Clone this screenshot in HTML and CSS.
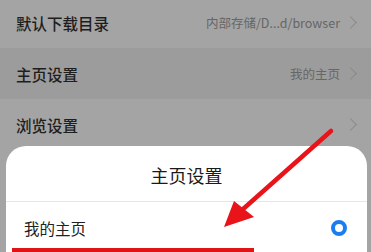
FILE: index.html
```html
<!DOCTYPE html>
<html lang="zh">

<head>
    <meta charset="UTF-8">
    <meta name="viewport" content="width=device-width, initial-scale=1.0">
    <title>主页设置</title>
    <link rel="stylesheet" href="styles.css">
</head>

<body>
    <div class="settings">
        <div class="row">
            <span class="label">默认下载目录</span>
            <span class="value">内部存储/D...d/browser</span>
            <span class="chevron"></span>
        </div>
        <div class="row pressed">
            <span class="label">主页设置</span>
            <span class="value">我的主页</span>
            <span class="chevron"></span>
        </div>
        <div class="row">
            <span class="label">浏览设置</span>
            <span class="value"></span>
            <span class="chevron"></span>
        </div>
    </div>

    <div class="sheet">
        <div class="sheet-title">主页设置</div>
        <div class="option">
            <span>我的主页</span>
            <span class="radio"></span>
        </div>
    </div>

    <div class="highlight"></div>

    <svg class="arrow" width="371" height="252" viewBox="0 0 371 252">
        <line x1="331" y1="131" x2="242" y2="210" stroke="#e8141a" stroke-width="4.5" stroke-linecap="round" />
        <polygon points="224,227 234,201 254,217" fill="#e8141a" />
    </svg>
</body>

</html>
```

FILE: styles.css
```css
body {
    margin: 0;
    width: 371px;
    height: 252px;
    overflow: hidden;
    position: relative;
    background-color: #a4a4a4;
    font-family: "Noto Sans CJK SC", "Noto Sans", sans-serif;
}

.settings {
    margin-top: -3px;
}

.row {
    height: 51px;
    display: flex;
    align-items: center;
    padding: 0 14px 0 16px;
}

.row.pressed {
    background-color: #9c9c9c;
}

.label {
    font-size: 15.5px;
    font-weight: 500;
    color: #1e1e1e;
    flex: 1;
}

.value {
    font-size: 12.5px;
    color: #666;
}

.chevron {
    width: 8px;
    height: 8px;
    border-top: 1.2px solid #8a8a8a;
    border-right: 1.2px solid #8a8a8a;
    transform: rotate(45deg);
    margin-left: 6px;
    margin-right: 2px;
}

.sheet {
    position: absolute;
    top: 146px;
    left: 6px;
    width: 361px;
    height: 106px;
    overflow: hidden;
    background-color: #fff;
    border-radius: 20px 20px 0 0;
}

.sheet-title {
    height: 56px;
    box-sizing: border-box;
    padding-top: 2px;
    display: flex;
    align-items: center;
    justify-content: center;
    font-size: 18px;
    color: #1a1a1a;
    border-bottom: 1px solid #e6e6e6;
}

.option {
    height: 52px;
    display: flex;
    align-items: center;
    justify-content: space-between;
    padding: 0 20px 0 18px;
    font-size: 15.5px;
    color: #222;
}

.radio {
    width: 8px;
    height: 8px;
    border: 4.5px solid #1a7ef2;
    border-radius: 50%;
}

.highlight {
    position: absolute;
    top: 248px;
    left: 12px;
    width: 242px;
    height: 4px;
    background-color: #e01414;
}

.arrow {
    position: absolute;
    top: 0;
    left: 0;
    pointer-events: none;
}
```
